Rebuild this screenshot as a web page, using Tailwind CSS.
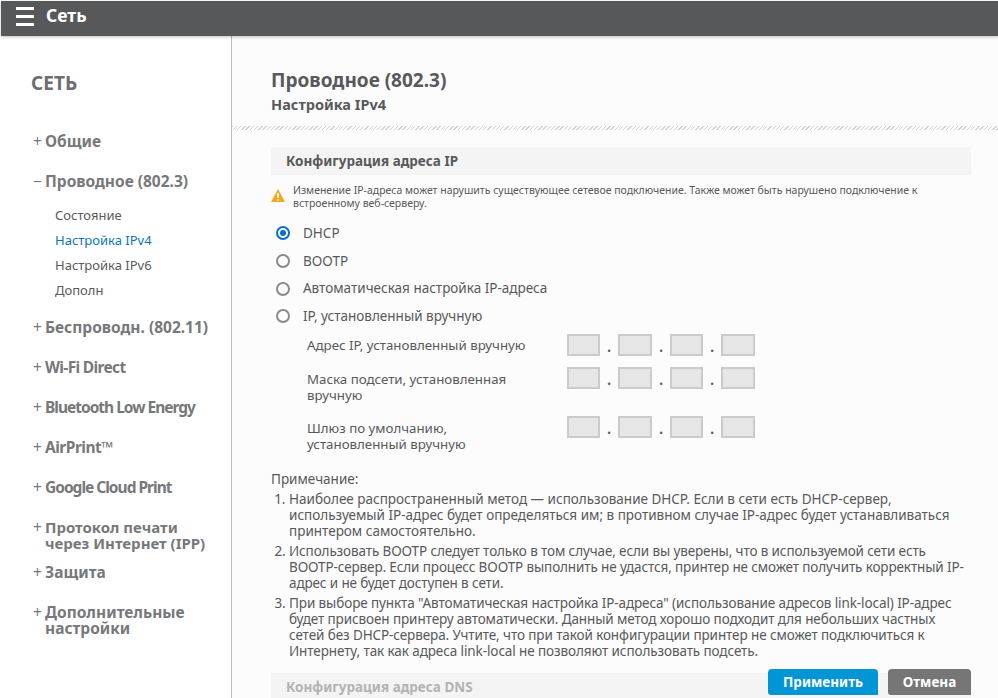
<!DOCTYPE html>
<html lang="ru">
<head>
  <meta charset="UTF-8">
  <title>Сеть</title>
  <script src="https://cdn.jsdelivr.net/npm/@tailwindcss/browser@4"></script>
</head>
<body class="w-[998px] h-[698px] overflow-hidden bg-white font-['Noto_Sans',sans-serif] text-[#58595b] relative">
  <!-- Header -->
  <header class="mt-px ml-px h-[35px] bg-[#565859] flex items-start text-white shadow-[0_1px_3px_rgba(0,0,0,0.25)] relative z-10">
    <div class="ml-[15px] mt-[6px] w-[18px] flex flex-col gap-[5px]">
      <span class="block h-[3px] bg-white"></span>
      <span class="block h-[3px] bg-white"></span>
      <span class="block h-[3px] bg-white"></span>
    </div>
    <span class="ml-[12px] mt-[6px] text-[17.5px] font-bold leading-none">Сеть</span>
  </header>

  <div class="flex h-[662px]">
    <!-- Sidebar -->
    <aside class="w-[232px] shrink-0 border-r border-[#bcbdbe] pl-[31px] pt-[36px] font-bold text-[#77787b]">
      <h2 class="text-[19px] leading-[22px] text-[#6d6e71]">СЕТЬ</h2>
      <ul class="mt-[39px] text-[15.5px] leading-[16px]">
        <li class="flex h-[40px]"><span class="ml-[2px] w-[12px] font-normal">+</span><span>Общие</span></li>
        <li class="flex h-[30px]"><span class="ml-[2px] w-[12px] font-normal">−</span><span>Проводное (802.3)</span></li>
        <li class="pl-[24px] text-[13px] font-normal text-[#58595b] leading-[25px]">
          <div>Состояние</div>
          <div class="text-[#0b76b8]">Настройка IPv4</div>
          <div>Настройка IPv6</div>
          <div>Дополн</div>
        </li>
        <li class="flex h-[40px] mt-[16px]"><span class="ml-[2px] w-[12px] font-normal">+</span><span>Беспроводн. (802.11)</span></li>
        <li class="flex h-[40px]"><span class="ml-[2px] w-[12px] font-normal">+</span><span class="tracking-[-0.65px]">Wi-Fi Direct</span></li>
        <li class="flex h-[40px]"><span class="ml-[2px] w-[12px] font-normal">+</span><span class="tracking-[-1px]">Bluetooth Low Energy</span></li>
        <li class="flex h-[40px]"><span class="ml-[2px] w-[12px] font-normal">+</span><span class="tracking-[-0.5px]">AirPrint™</span></li>
        <li class="flex h-[40px]"><span class="ml-[2px] w-[12px] font-normal">+</span><span class="tracking-[-1px]">Google Cloud Print</span></li>
        <li class="flex h-[45px]"><span class="ml-[2px] w-[12px] font-normal">+</span><span class="text-[15px]">Протокол печати<br>через Интернет (IPP)</span></li>
        <li class="flex h-[40px]"><span class="ml-[2px] w-[12px] font-normal">+</span><span>Защита</span></li>
        <li class="flex h-[40px]"><span class="ml-[2px] w-[12px] font-normal">+</span><span>Дополнительные<br>настройки</span></li>
      </ul>
    </aside>

    <!-- Main -->
    <main class="flex-1 bg-[#fcfcfc] overflow-hidden">
      <div class="pl-[39px] pt-[32px] h-[90px]">
        <h1 class="text-[19px] leading-[24px] font-bold text-[#58595b]">Проводное (802.3)</h1>
        <h2 class="mt-[2px] text-[14.5px] leading-[20px] font-bold text-[#58595b]">Настройка IPv4</h2>
      </div>
      <div class="h-[4px] bg-[repeating-linear-gradient(135deg,#d4d4d4_0,#d4d4d4_1px,#fcfcfc_1px,#fcfcfc_3px)]"></div>

      <div class="ml-[39px] w-[700px] mt-[17px]">
        <div class="h-[28px] bg-[#f4f4f4] pl-[15px] flex items-center text-[13.5px] font-bold text-[#58595b]">Конфигурация адреса IP</div>

        <div class="flex mt-[9px]">
          <svg class="mt-[5px] shrink-0" width="14" height="13" viewBox="0 0 14 13">
            <path d="M7 0 L14 13 L0 13 Z" fill="#f5a81c"/>
            <rect x="6.2" y="4" width="1.6" height="5" fill="#fff"/>
            <rect x="6.2" y="10" width="1.6" height="1.6" fill="#fff"/>
          </svg>
          <p class="ml-[8px] w-[640px] text-[10.5px] leading-[13px] text-[#58595b]">Изменение IP-адреса может нарушить существующее сетевое подключение. Также может быть нарушено подключение к<br>встроенному веб-серверу.</p>
        </div>

        <!-- Radio buttons -->
        <div class="mt-[9px] text-[13.5px] ml-[5px]">
          <label class="flex items-center h-[28px]">
            <span class="w-[14px] h-[14px] rounded-full border-2 border-[#0a6ed1] flex items-center justify-center"><span class="w-[6px] h-[6px] rounded-full bg-[#0a6ed1]"></span></span>
            <span class="ml-[13px]">DHCP</span>
          </label>
          <label class="flex items-center h-[28px]">
            <span class="w-[14px] h-[14px] rounded-full border-2 border-[#8a8a8a]"></span>
            <span class="ml-[13px]">BOOTP</span>
          </label>
          <label class="flex items-center h-[27px]">
            <span class="w-[14px] h-[14px] rounded-full border-2 border-[#8a8a8a]"></span>
            <span class="ml-[13px]">Автоматическая настройка IP-адреса</span>
          </label>
          <label class="flex items-center h-[28px]">
            <span class="w-[14px] h-[14px] rounded-full border-2 border-[#8a8a8a]"></span>
            <span class="ml-[13px]">IP, установленный вручную</span>
          </label>
        </div>

        <!-- Manual IP rows -->
        <div class="ml-[36px] mt-[4px] text-[13.3px] leading-[16px]">
          <div class="flex h-[33px]">
            <div class="w-[260px] pt-[3px]">Адрес IP, установленный вручную</div>
            <div class="flex items-start">
              <span class="w-[33px] h-[22px] bg-[#e6e6e6] border-2 border-[#cbcbcb]"></span>
              <span class="w-[18px] h-[22px] text-center font-bold leading-[26px]">.</span>
              <span class="w-[34px] h-[22px] bg-[#e6e6e6] border-2 border-[#cbcbcb]"></span>
              <span class="w-[18px] h-[22px] text-center font-bold leading-[26px]">.</span>
              <span class="w-[33px] h-[22px] bg-[#e6e6e6] border-2 border-[#cbcbcb]"></span>
              <span class="w-[18px] h-[22px] text-center font-bold leading-[26px]">.</span>
              <span class="w-[34px] h-[22px] bg-[#e6e6e6] border-2 border-[#cbcbcb]"></span>
            </div>
          </div>
          <div class="flex h-[49px]">
            <div class="w-[260px] pt-[4px]">Маска подсети, установленная<br>вручную</div>
            <div class="flex items-start">
              <span class="w-[33px] h-[22px] bg-[#e6e6e6] border-2 border-[#cbcbcb]"></span>
              <span class="w-[18px] h-[22px] text-center font-bold leading-[26px]">.</span>
              <span class="w-[34px] h-[22px] bg-[#e6e6e6] border-2 border-[#cbcbcb]"></span>
              <span class="w-[18px] h-[22px] text-center font-bold leading-[26px]">.</span>
              <span class="w-[33px] h-[22px] bg-[#e6e6e6] border-2 border-[#cbcbcb]"></span>
              <span class="w-[18px] h-[22px] text-center font-bold leading-[26px]">.</span>
              <span class="w-[34px] h-[22px] bg-[#e6e6e6] border-2 border-[#cbcbcb]"></span>
            </div>
          </div>
          <div class="flex h-[50px]">
            <div class="w-[260px] pt-[4px]">Шлюз по умолчанию,<br>установленный вручную</div>
            <div class="flex items-start">
              <span class="w-[33px] h-[22px] bg-[#e6e6e6] border-2 border-[#cbcbcb]"></span>
              <span class="w-[18px] h-[22px] text-center font-bold leading-[26px]">.</span>
              <span class="w-[34px] h-[22px] bg-[#e6e6e6] border-2 border-[#cbcbcb]"></span>
              <span class="w-[18px] h-[22px] text-center font-bold leading-[26px]">.</span>
              <span class="w-[33px] h-[22px] bg-[#e6e6e6] border-2 border-[#cbcbcb]"></span>
              <span class="w-[18px] h-[22px] text-center font-bold leading-[26px]">.</span>
              <span class="w-[34px] h-[22px] bg-[#e6e6e6] border-2 border-[#cbcbcb]"></span>
            </div>
          </div>
        </div>

        <!-- Notes -->
        <div class="mt-[5px] text-[13.5px] leading-[16px]">
          <p>Примечание:</p>
          <ol class="mt-[4px] ml-[18px] list-decimal w-[690px]">
            <li class="mb-[4px]">Наиболее распространенный метод — использование DHCP. Если в сети есть DHCP-сервер,<br>используемый IP-адрес будет определяться им; в противном случае IP-адрес будет устанавливаться<br>принтером самостоятельно.</li>
            <li class="mb-[4px] tracking-[-0.12px]">Использовать BOOTP следует только в том случае, если вы уверены, что в используемой сети есть<br>BOOTP-сервер. Если процесс BOOTP выполнить не удастся, принтер не сможет получить корректный IP-<br>адрес и не будет доступен в сети.</li>
            <li class="tracking-[-0.1px]">При выборе пункта "Автоматическая настройка IP-адреса" (использование адресов link-local) IP-адрес<br>будет присвоен принтеру автоматически. Данный метод хорошо подходит для небольших частных<br>сетей без DHCP-сервера. Учтите, что при такой конфигурации принтер не сможет подключиться к<br>Интернету, так как адреса link-local не позволяют использовать подсеть.</li>
          </ol>
        </div>

        <div class="mt-[14px] h-[28px] bg-[#f4f4f4] pl-[15px] flex items-center text-[13.5px] font-bold text-[#b3b3b3]">Конфигурация адреса DNS</div>
      </div>
    </main>
  </div>

  <!-- Floating action buttons -->
  <div class="absolute left-[768px] top-[669px] flex gap-[10px] text-[13.5px] font-bold text-white">
    <button class="w-[110px] h-[26px] rounded-t-[4px] rounded-bl-[3px] bg-[#0096d6]">Применить</button>
    <button class="w-[83px] h-[26px] rounded-t-[4px] rounded-bl-[3px] bg-[#767676]">Отмена</button>
  </div>
</body>
</html>
